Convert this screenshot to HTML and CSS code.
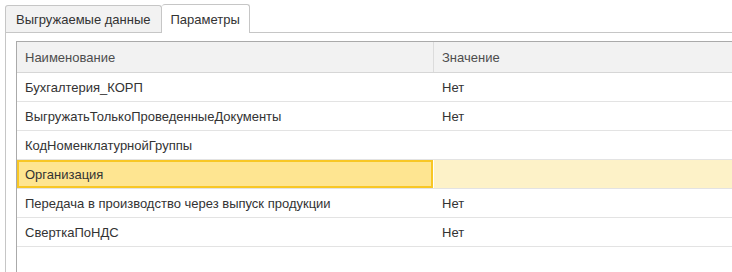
FILE: index.html
```html
<!DOCTYPE html>
<html>
<head>
    <meta charset="UTF-8">
    <title>Параметры выгрузки</title>
    <link rel="stylesheet" href="styles.css">
</head>
<body>
    <div class="tab-bar">
        <div class="tab">Выгружаемые данные</div>
        <div class="tab tab-active">Параметры</div>
    </div>

    <div class="tab-panel">
        <div class="grid">
            <div class="grid-row grid-header">
                <div class="cell cell-name">Наименование</div>
                <div class="cell cell-value">Значение</div>
            </div>
            <div class="grid-row">
                <div class="cell cell-name">Бухгалтерия_КОРП</div>
                <div class="cell cell-value">Нет</div>
            </div>
            <div class="grid-row">
                <div class="cell cell-name">ВыгружатьТолькоПроведенныеДокументы</div>
                <div class="cell cell-value">Нет</div>
            </div>
            <div class="grid-row">
                <div class="cell cell-name">КодНоменклатурнойГруппы</div>
                <div class="cell cell-value"></div>
            </div>
            <div class="grid-row selected">
                <div class="cell cell-name">Организация</div>
                <div class="cell cell-value"></div>
            </div>
            <div class="grid-row">
                <div class="cell cell-name">Передача в производство через выпуск продукции</div>
                <div class="cell cell-value">Нет</div>
            </div>
            <div class="grid-row">
                <div class="cell cell-name">СверткаПоНДС</div>
                <div class="cell cell-value">Нет</div>
            </div>
        </div>
    </div>
</body>
</html>
```

FILE: styles.css
```css
:root {
    --tab-border: #c6c6c6;
    --grid-border: #aaaaaa;
    --row-line: #e3e3e3;
    --text-color: #333333;
}

html, body {
    margin: 0;
    padding: 0;
    height: 100%;
    overflow: hidden;
}

body {
    font-family: Arial, "Liberation Sans", sans-serif;
    font-size: 13px;
    color: var(--text-color);
    background-color: white;
    display: flex;
    flex-direction: column;
}

.tab-bar {
    display: flex;
    align-items: flex-end;
    height: 33px;
    flex-shrink: 0;
    margin-left: 5px;
    margin-bottom: -1px;
    position: relative;
    z-index: 1;
}

.tab {
    box-sizing: border-box;
    height: 27px;
    margin-bottom: 1px;
    padding: 0 10px;
    display: flex;
    align-items: center;
    background-color: #f2f2f2;
    border: 1px solid var(--tab-border);
    border-bottom: none;
    border-radius: 3px 3px 0 0;
    white-space: nowrap;
}

.tab-active {
    height: 29px;
    margin-bottom: 0;
    padding: 0 9px 0 9px;
    background-color: white;
    border-left: none;
}

.tab-panel {
    flex: 1;
    min-height: 0;
    margin-left: 5px;
    padding: 8px 0 0 10px;
    border-left: 1px solid var(--tab-border);
    border-top: 1px solid var(--tab-border);
    display: flex;
    flex-direction: column;
}

.grid {
    flex: 1;
    min-height: 0;
    overflow: hidden;
    border-top: 1px solid var(--grid-border);
    border-left: 1px solid var(--grid-border);
}

.grid-row {
    display: flex;
    height: 28px;
    border-bottom: 1px solid var(--row-line);
}

.cell {
    box-sizing: border-box;
    display: flex;
    align-items: center;
    padding-left: 8px;
    white-space: nowrap;
}

.cell-name {
    width: 417px;
    flex-shrink: 0;
    border-right: 1px solid white;
}

.cell-value {
    flex: 1;
}

.grid-header {
    height: 30px;
    background-color: #f2f2f2;
    color: #4d4d4d;
    border-bottom-color: #d6d6d6;
}

.grid-header .cell-name {
    border-right-color: #dcdcdc;
}

.selected .cell-name {
    width: 416px;
    margin-right: 1px;
    padding-left: 6px;
    background-color: #fee591;
    border: 2px solid #f8c725;
}

.selected .cell-value {
    background-color: #fdf2c8;
}
```
